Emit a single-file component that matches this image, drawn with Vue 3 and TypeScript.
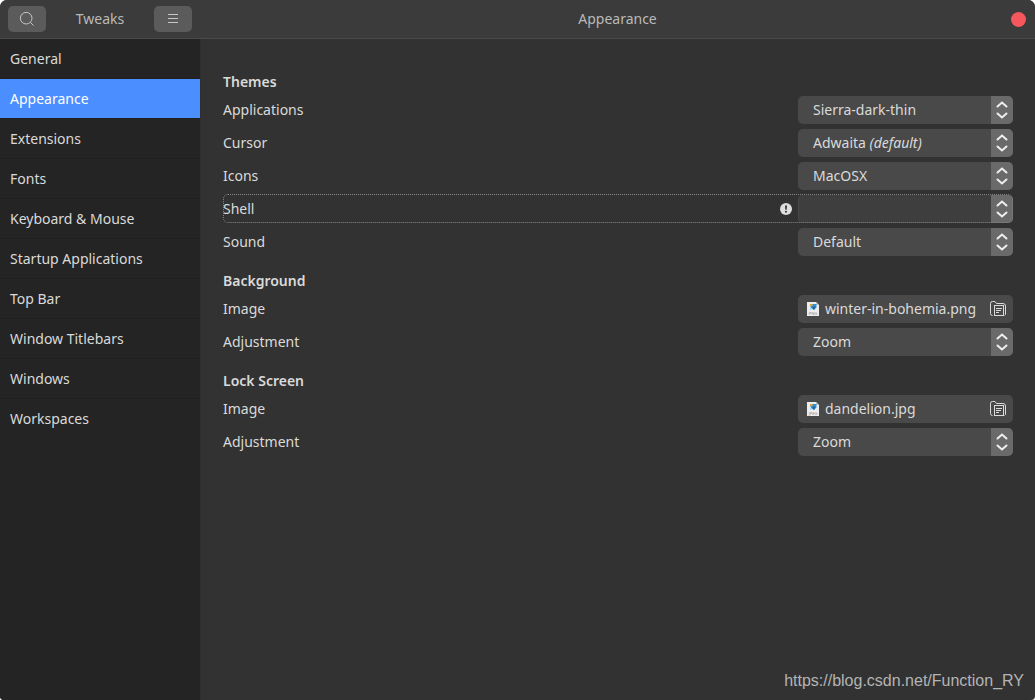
<script setup lang="ts">
import { ref } from 'vue'

interface Row {
  id: string
  label: string
  kind: 'select' | 'file'
  value: string
  note?: string
  disabled?: boolean
  tag?: string
}

interface Section {
  title: string
  rows: Row[]
}

const pages: string[] = [
  'General',
  'Appearance',
  'Extensions',
  'Fonts',
  'Keyboard & Mouse',
  'Startup Applications',
  'Top Bar',
  'Window Titlebars',
  'Windows',
  'Workspaces',
]
const current = ref('Appearance')

const sections: Section[] = [
  {
    title: 'Themes',
    rows: [
      { id: 'applications', label: 'Applications', kind: 'select', value: 'Sierra-dark-thin' },
      { id: 'cursor', label: 'Cursor', kind: 'select', value: 'Adwaita', note: '(default)' },
      { id: 'icons', label: 'Icons', kind: 'select', value: 'MacOSX' },
      { id: 'shell', label: 'Shell', kind: 'select', value: '', disabled: true },
      { id: 'sound', label: 'Sound', kind: 'select', value: 'Default' },
    ],
  },
  {
    title: 'Background',
    rows: [
      { id: 'bg-image', label: 'Image', kind: 'file', value: 'winter-in-bohemia.png', tag: 'PNG' },
      { id: 'bg-adjustment', label: 'Adjustment', kind: 'select', value: 'Zoom' },
    ],
  },
  {
    title: 'Lock Screen',
    rows: [
      { id: 'lock-image', label: 'Image', kind: 'file', value: 'dandelion.jpg', tag: 'JPEG' },
      { id: 'lock-adjustment', label: 'Adjustment', kind: 'select', value: 'Zoom' },
    ],
  },
]
</script>

<template>
  <div class="window">
    <header class="titlebar">
      <div class="title-left">
        <button class="tool" type="button" aria-label="Search">
          <svg width="16" height="16" viewBox="0 0 16 16" fill="none" stroke="currentColor">
            <circle cx="7.2" cy="7.2" r="5.8" />
            <path d="M11.4 11.4l3.1 3.1" />
          </svg>
        </button>
        <span class="app-name">Tweaks</span>
        <button class="tool" type="button" aria-label="Menu">
          <svg width="16" height="16" viewBox="0 0 16 16" fill="none" stroke="currentColor">
            <path d="M3 3.5h10M3 7.5h10M3 11.5h10" />
          </svg>
        </button>
      </div>
      <h1 class="page-name">{{ current }}</h1>
      <button class="close" type="button" aria-label="Close"></button>
    </header>

    <div class="body">
      <nav class="sidebar">
        <button
          v-for="page in pages"
          :key="page"
          type="button"
          class="page"
          :class="{ active: page === current }"
          @click="current = page"
        >
          {{ page }}
        </button>
      </nav>

      <main class="content">
        <section v-for="section in sections" :key="section.title" class="section">
          <h2>{{ section.title }}</h2>
          <div v-for="row in section.rows" :key="row.id" class="row" :class="{ focused: row.disabled }">
            <label :for="row.id">{{ row.label }}</label>
            <svg v-if="row.disabled" class="warning" width="12" height="12" viewBox="0 0 12 12">
              <circle cx="6" cy="6" r="6" fill="#dedede" />
              <path d="M5 2.5h2l-.3 4.2H5.3z" fill="#333" />
              <circle cx="6" cy="8.8" r="1" fill="#333" />
            </svg>
            <div v-if="row.kind === 'select'" class="combo" :class="{ disabled: row.disabled }">
              <select :id="row.id" :disabled="row.disabled" :class="{ noted: row.note }">
                <option>{{ row.value }}{{ row.note ? ' ' + row.note : '' }}</option>
              </select>
              <span v-if="row.note" class="rich" aria-hidden="true">{{ row.value }} <em>{{ row.note }}</em></span>
              <span class="arrows">
                <svg width="22" height="28" viewBox="0 0 22 28" fill="none" stroke="currentColor" stroke-width="2" stroke-linecap="round">
                  <path d="M6.5 10.5l4.5-4 4.5 4M6.5 17.5l4.5 4 4.5-4" />
                </svg>
              </span>
            </div>
            <button v-else :id="row.id" type="button" class="file">
              <svg width="12" height="16" viewBox="0 0 12 16">
                <path d="M0 1h9l3 3v11H0z" fill="#ededed" />
                <path d="M9 1l3 3H9z" fill="#bcbcbc" />
                <path d="M3 4.5L5 3h4.500v3.500L7 9 4 7z" fill="#2f91d8" />
                <path d="M3 3h2.500v2H3z" fill="#e2a72e" />
                <path d="M6 5.500h2.500L7 9 5.500 7z" fill="#285f94" />
                <path d="M3 7h1.500v2H3z" fill="#a9d3ee" />
                <text x="6" y="14" text-anchor="middle" font-size="4" fill="#888">{{ row.tag }}</text>
              </svg>
              <span class="file-name">{{ row.value }}</span>
              <svg width="16" height="16" viewBox="0 0 16 16" fill="none" stroke="currentColor">
                <path d="M2.500 14.500A2 2 0 0 1 .5 12.500V2.500A2 2 0 0 1 2.500 .5h2.500l1.500 2H13A2.500 2.500 0 0 1 15.500 5v8.500l-1 1" />
                <rect x="4.5" y="4.5" width="9" height="10" />
                <path d="M6 7.500h6M6 9.500h5M6 11.500h3" />
              </svg>
            </button>
          </div>
        </section>
        <footer class="watermark">https://blog.csdn.net/Function_RY</footer>
      </main>
    </div>
  </div>
</template>

<style>
body {
  background: #fff;
}
</style>

<style scoped>
* {
  box-sizing: border-box;
}

button,
select {
  font: inherit;
  color: inherit;
  border: 0;
  margin: 0;
}

svg {
  display: block;
  flex: none;
}

.window {
  display: flex;
  flex-direction: column;
  min-height: 100vh;
  overflow: hidden;
  border-radius: 7px 7px 4px 4px;
  background: #323232;
  color: #dadada;
  font: 14px/18px "Noto Sans", "Open Sans", sans-serif;
}

.titlebar {
  display: grid;
  grid-template-columns: 200px 1fr;
  align-items: center;
  height: 39px;
  background: #3b3b3b;
  border-bottom: 1px solid #4a4a4a;
  color: #b9b9b9;
}

.title-left {
  display: flex;
  align-items: center;
  justify-content: space-between;
  padding: 0 8px;
}

.tool {
  display: grid;
  place-items: center;
  width: 38px;
  height: 26px;
  padding: 0;
  border-radius: 5px;
  background: #5b5b5b;
  color: #c6c6c6;
}

.page-name {
  grid-area: 1 / 2;
  margin: 0;
  font-size: 14px;
  font-weight: 400;
  text-align: center;
}

.close {
  grid-area: 1 / 2;
  justify-self: end;
  width: 15px;
  height: 15px;
  margin-right: 9px;
  padding: 0;
  border-radius: 50%;
  background: #f5575d;
}

.body {
  display: flex;
  flex: 1;
}

.sidebar {
  display: flex;
  flex-direction: column;
  flex: none;
  width: 201px;
  background: #242424;
  border-right: 1px solid #2e2e2e;
}

.page {
  height: 40px;
  padding: 0 10px;
  background: transparent;
  border-bottom: 1px solid #202020;
  text-align: left;
}

.page:last-child {
  border-bottom-color: transparent;
}

.page.active {
  background: #4b8eff;
  background-clip: padding-box;
  color: #fff;
}

.content {
  display: flex;
  flex-direction: column;
  gap: 16px;
  flex: 1;
  padding: 34px 22px 0;
}

.section {
  display: flex;
  flex-direction: column;
  gap: 5px;
}

h2 {
  margin: 0;
  font-size: 14px;
  line-height: 18px;
  font-weight: 600;
}

.row {
  position: relative;
  display: flex;
  align-items: center;
  height: 28px;
}

.row label {
  flex: 1;
}

.row.focused::after {
  content: "";
  position: absolute;
  inset: -1px 0 0;
  border: 1px dotted #858585;
  border-radius: 5px;
  pointer-events: none;
}

.warning {
  margin-right: 6px;
}

.combo {
  position: relative;
  display: flex;
  width: 215px;
  height: 28px;
  border-radius: 5px;
  overflow: hidden;
  background: #494949;
}

.combo select {
  appearance: none;
  flex: 1;
  padding: 0 15px;
  background: transparent;
  opacity: 1;
}

.combo select.noted {
  color: transparent;
}

.rich {
  position: absolute;
  left: 15px;
  top: 5px;
  pointer-events: none;
}

.arrows {
  width: 22px;
  background: #6a6a6a;
  color: #efefef;
  pointer-events: none;
}

.combo.disabled {
  background: #3e3e3e;
  box-shadow: inset 1px 0 #484848;
}

.file {
  display: flex;
  align-items: center;
  gap: 6px;
  width: 215px;
  height: 28px;
  padding: 0 7px 0 9px;
  border-radius: 5px;
  background: #494949;
  text-align: left;
}

.file-name {
  flex: 1;
  white-space: nowrap;
}

.watermark {
  margin: auto -11px 9px 0;
  color: #b4b4b4;
  font: 16px/20px "Liberation Sans", Arial, sans-serif;
  text-align: right;
}
</style>
